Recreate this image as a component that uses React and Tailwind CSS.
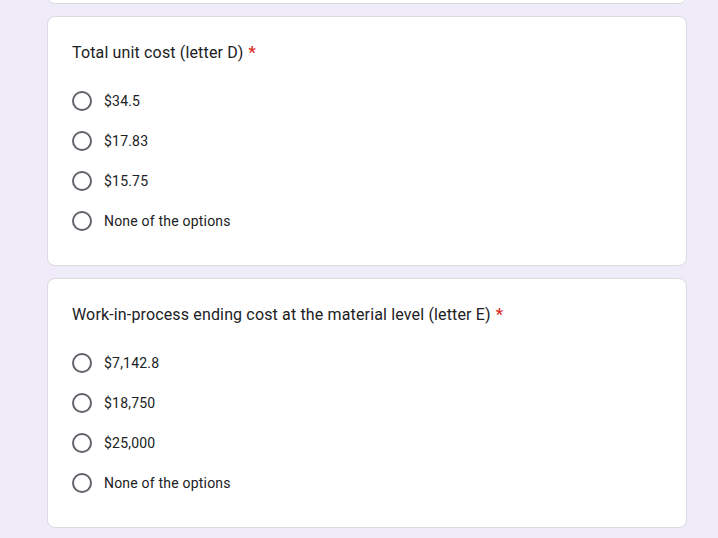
const questions = [
    {
        id: 1,
        title: "Total unit cost (letter D)",
        options: ["$34.5", "$17.83", "$15.75", "None of the options"],
    },
    {
        id: 2,
        title: "Work-in-process ending cost at the material level (letter E)",
        options: ["$7,142.8", "$18,750", "$25,000", "None of the options"],
    },
]

function Question({ item }) {
    return (
        <div className="w-[640px] bg-white border border-[#dadce0] rounded-lg px-6 pt-6 pb-6 mb-3">
            <div className="text-[16px] leading-6 text-[#202124] tracking-[0.15px]" style={{ fontFamily: 'Roboto, Arial, sans-serif' }}>
                {item.title}
                <span className="text-[#d93025] ml-[5px] font-bold">*</span>
            </div>
            <div className="mt-[16px]">
                {item.options.map(opt => {
                    return (
                        <label key={opt} className="flex items-center h-10 cursor-pointer">
                            <span className="w-5 h-5 rounded-full border-2 border-[#5f6368] shrink-0"></span>
                            <span className="ml-3 text-[14px] leading-5 text-[#202124] tracking-[0.2px]">{opt}</span>
                        </label>
                    )
                })}
            </div>
        </div>
    )
}

export default function App() {
    return (
        <div className="min-h-[538px] bg-[#f0ebf8] pl-[47px] overflow-hidden" style={{ fontFamily: 'Roboto, Arial, sans-serif' }}>
            {/* the card above, only its bottom edge shows */}
            <div className="w-[640px] h-[40px] -mt-[36px] mb-3 bg-white border border-[#dadce0] rounded-lg"></div>
            {questions.map(item => <Question key={item.id} item={item} />)}
        </div>
    )
}
